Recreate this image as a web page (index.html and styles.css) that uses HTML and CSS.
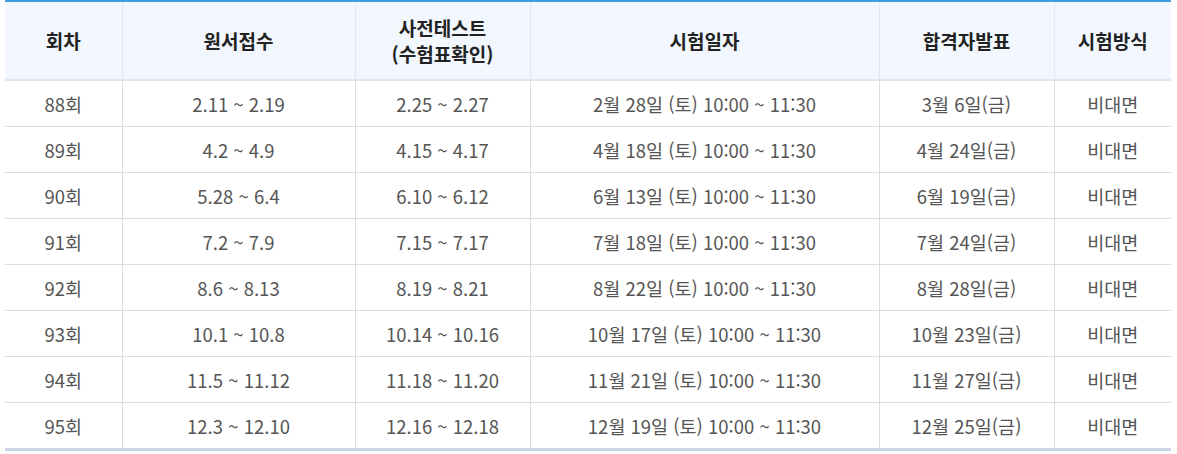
FILE: index.html
```html
<!DOCTYPE html>
<html lang="ko">
<head>
<meta charset="utf-8">
<link rel="stylesheet" href="styles.css">
</head>
<body>
<div class="wrap">
<table class="sched">
<colgroup>
<col class="c1"><col class="c2"><col class="c3"><col class="c4"><col class="c5"><col class="c6">
</colgroup>
<thead>
<tr><th>회차</th><th>원서접수</th><th>사전테스트<br>(수험표확인)</th><th>시험일자</th><th>합격자발표</th><th>시험방식</th></tr>
</thead>
<tbody>
<tr><td>88회</td><td>2.11 ~ 2.19</td><td>2.25 ~ 2.27</td><td>2월 28일 (토) 10:00 ~ 11:30</td><td>3월 6일(금)</td><td>비대면</td></tr>
<tr><td>89회</td><td>4.2 ~ 4.9</td><td>4.15 ~ 4.17</td><td>4월 18일 (토) 10:00 ~ 11:30</td><td>4월 24일(금)</td><td>비대면</td></tr>
<tr><td>90회</td><td>5.28 ~ 6.4</td><td>6.10 ~ 6.12</td><td>6월 13일 (토) 10:00 ~ 11:30</td><td>6월 19일(금)</td><td>비대면</td></tr>
<tr><td>91회</td><td>7.2 ~ 7.9</td><td>7.15 ~ 7.17</td><td>7월 18일 (토) 10:00 ~ 11:30</td><td>7월 24일(금)</td><td>비대면</td></tr>
<tr><td>92회</td><td>8.6 ~ 8.13</td><td>8.19 ~ 8.21</td><td>8월 22일 (토) 10:00 ~ 11:30</td><td>8월 28일(금)</td><td>비대면</td></tr>
<tr><td>93회</td><td>10.1 ~ 10.8</td><td>10.14 ~ 10.16</td><td>10월 17일 (토) 10:00 ~ 11:30</td><td>10월 23일(금)</td><td>비대면</td></tr>
<tr><td>94회</td><td>11.5 ~ 11.12</td><td>11.18 ~ 11.20</td><td>11월 21일 (토) 10:00 ~ 11:30</td><td>11월 27일(금)</td><td>비대면</td></tr>
<tr><td>95회</td><td>12.3 ~ 12.10</td><td>12.16 ~ 12.18</td><td>12월 19일 (토) 10:00 ~ 11:30</td><td>12월 25일(금)</td><td>비대면</td></tr>
</tbody>
</table>
</div>
</body>
</html>
```

FILE: styles.css
```css
html, body {
  margin: 0;
  padding: 0;
  background: #fff;
}
.wrap {
  padding: 0 6px 0 5px;
}
.sched {
  width: 1166px;
  border-collapse: collapse;
  table-layout: fixed;
  font-family: "Noto Sans CJK KR", "Noto Sans", sans-serif;
  font-size: 18.5px;
  color: #555;
  border-top: 2px solid #3d9fe3;
  border-bottom: 3px solid #c8d6e5;
}
.c1 { width: 117px; }
.c2 { width: 233px; }
.c3 { width: 175px; }
.c4 { width: 349px; }
.c5 { width: 175px; }
.c6 { width: 117px; }
.sched th {
  background: #f1f7fd;
  color: #222;
  font-size: 19px;
  font-weight: 700;
  height: 77px;
  padding: 0;
  line-height: 26px;
  border-left: 1px solid #e1e7ee;
  border-bottom: 2px solid #dbe6f1;
}
.sched td {
  height: 45px;
  padding: 0;
  text-align: center;
  line-height: 24px;
  border-left: 1px solid #dcdcdc;
  border-top: 1px solid #dcdcdc;
}
.sched tbody tr:first-child td {
  border-top: none;
}
.sched th:first-child,
.sched td:first-child {
  border-left: none;
}
```
